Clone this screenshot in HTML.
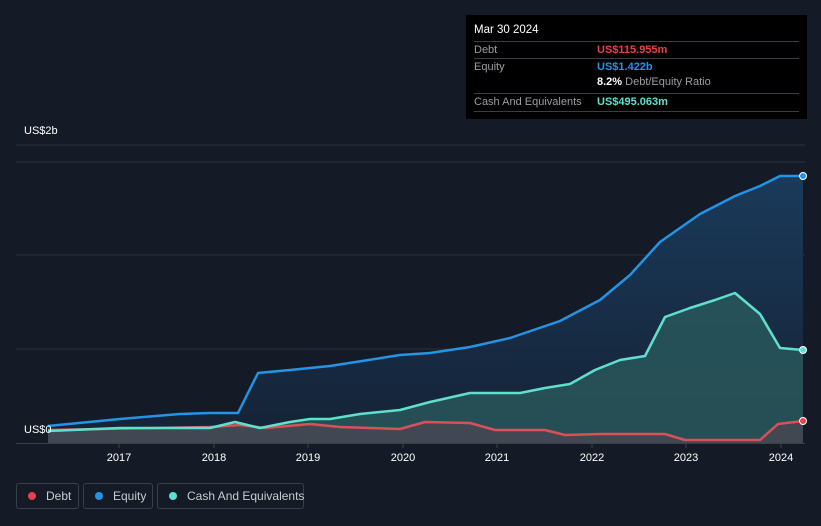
<!DOCTYPE html><html><head><style>
body{margin:0;width:821px;height:526px;background:#151b26;font-family:"Liberation Sans",sans-serif;overflow:hidden;position:relative}
.tt{position:absolute;left:466px;top:15px;width:341px;height:104px;background:#000;color:#fff;font-size:11px}
.r{position:absolute;left:8px;width:325px;border-top:1px solid #3a3d45;height:17px;line-height:17px}
.l{color:#9a9da3}
.lg{position:absolute;top:483px;height:26px;border:1px solid #3a3f4a;border-radius:3px;color:#c8cbd0;font-size:12px;line-height:24px;box-sizing:border-box;white-space:nowrap}
.lg i{display:inline-block;width:8px;height:8px;border-radius:50%;margin:0 10px 0 11px;vertical-align:0}
.ax{position:absolute;top:424px;color:#fff;font-size:11px}
</style></head><body>
<div class="tt">
<div style="position:absolute;left:8px;top:9px;font-size:11.5px">Mar 30 2024</div>
<div class="r" style="top:26px"><span class="l">Debt</span><span style="position:absolute;left:123px;color:#e8404a;font-weight:bold">US$115.955m</span></div>
<div class="r" style="top:43px"><span class="l">Equity</span><span style="position:absolute;left:123px;color:#2394e6;font-weight:bold">US$1.422b</span></div>
<div style="position:absolute;left:131px;top:61px"><b>8.2%</b> <span class="l">Debt/Equity Ratio</span></div>
<div class="r" style="top:78px;border-bottom:1px solid #3a3d45"><span class="l">Cash And Equivalents</span><span style="position:absolute;left:123px;color:#5fe0cc;font-weight:bold">US$495.063m</span></div>
</div>
<div style="position:absolute;left:24px;top:125px;color:#fff;font-size:11px">US$2b</div>
<svg width="821" height="526" style="position:absolute;left:0;top:0">
<defs><linearGradient id="g" x1="0" y1="0" x2="0" y2="1"><stop offset="0" stop-color="#1a3a5a"/><stop offset="1" stop-color="#152235"/></linearGradient></defs>
<line x1="16" y1="145" x2="805" y2="145" stroke="#2a303a"/>
<line x1="16" y1="162" x2="805" y2="162" stroke="#2a303a"/>
<line x1="16" y1="255" x2="805" y2="255" stroke="#2a303a"/>
<line x1="16" y1="349" x2="805" y2="349" stroke="#2a303a"/>
<path d="M48,426 L120,419 180,414 210,413 238,413 258,373 290,370 330,366 400,355 430,353 470,347 510,338 560,321 600,300 630,275 660,242 700,214 735,196 760,186 780,176 803,176 L803,443 48,443Z" fill="url(#g)"/>
<path d="M48,431 L120,428 210,428 235,422 260,428 290,422 310,419 330,419 360,414 400,410 430,402 470,393 520,393 545,388 570,384 595,370 620,360 645,356 665,317 690,308 715,300 735,293 760,314 780,348 803,350 L803,443 48,443Z" fill="#2a5a5c" opacity=".8"/>
<path d="M48,430 L210,427 240,425 265,428 310,424 340,427 400,429 425,422 470,423 495,430 545,430 565,435 600,434 665,434 685,440 760,440 778,424 803,421 L803,443 48,443Z" fill="#4a4650" opacity=".8"/>
<path d="M48,426 L120,419 180,414 210,413 238,413 258,373 290,370 330,366 400,355 430,353 470,347 510,338 560,321 600,300 630,275 660,242 700,214 735,196 760,186 780,176 803,176" fill="none" stroke="#2394e6" stroke-width="2.5" stroke-linejoin="round"/>
<path d="M48,430 L210,427 240,425 265,428 310,424 340,427 400,429 425,422 470,423 495,430 545,430 565,435 600,434 665,434 685,440 760,440 778,424 803,421" fill="none" stroke="#d9505a" stroke-width="2.5" stroke-linejoin="round"/>
<path d="M48,431 L120,428 210,428 235,422 260,428 290,422 310,419 330,419 360,414 400,410 430,402 470,393 520,393 545,388 570,384 595,370 620,360 645,356 665,317 690,308 715,300 735,293 760,314 780,348 803,350" fill="none" stroke="#5fe0cc" stroke-width="2.5" stroke-linejoin="round"/>
<circle cx="803" cy="176" r="3.5" fill="#2394e6" stroke="#fff"/>
<circle cx="803" cy="350" r="3.5" fill="#5fe0cc" stroke="#fff"/>
<circle cx="803" cy="421" r="3.5" fill="#e8404a" stroke="#fff"/>
<line x1="16" y1="443.5" x2="805" y2="443.5" stroke="#3a404a"/>
<g stroke="#3a404a"><line x1="119" y1="443" x2="119" y2="448"/><line x1="214" y1="443" x2="214" y2="448"/><line x1="308" y1="443" x2="308" y2="448"/><line x1="403" y1="443" x2="403" y2="448"/><line x1="497" y1="443" x2="497" y2="448"/><line x1="592" y1="443" x2="592" y2="448"/><line x1="686" y1="443" x2="686" y2="448"/><line x1="781" y1="443" x2="781" y2="448"/></g>
<g fill="#fff" font-size="11" text-anchor="middle" font-family="Liberation Sans"><text x="119" y="461">2017</text><text x="214" y="461">2018</text><text x="308" y="461">2019</text><text x="403" y="461">2020</text><text x="497" y="461">2021</text><text x="592" y="461">2022</text><text x="686" y="461">2023</text><text x="781" y="461">2024</text></g>
</svg>
<div class="ax" style="left:24px">US$0</div>
<div class="lg" style="left:16px;width:63px"><i style="background:#e8404a"></i>Debt</div>
<div class="lg" style="left:83px;width:70px"><i style="background:#2394e6"></i>Equity</div>
<div class="lg" style="left:157px;width:147px"><i style="background:#5fe0cc"></i>Cash And Equivalents</div>
</body></html>
